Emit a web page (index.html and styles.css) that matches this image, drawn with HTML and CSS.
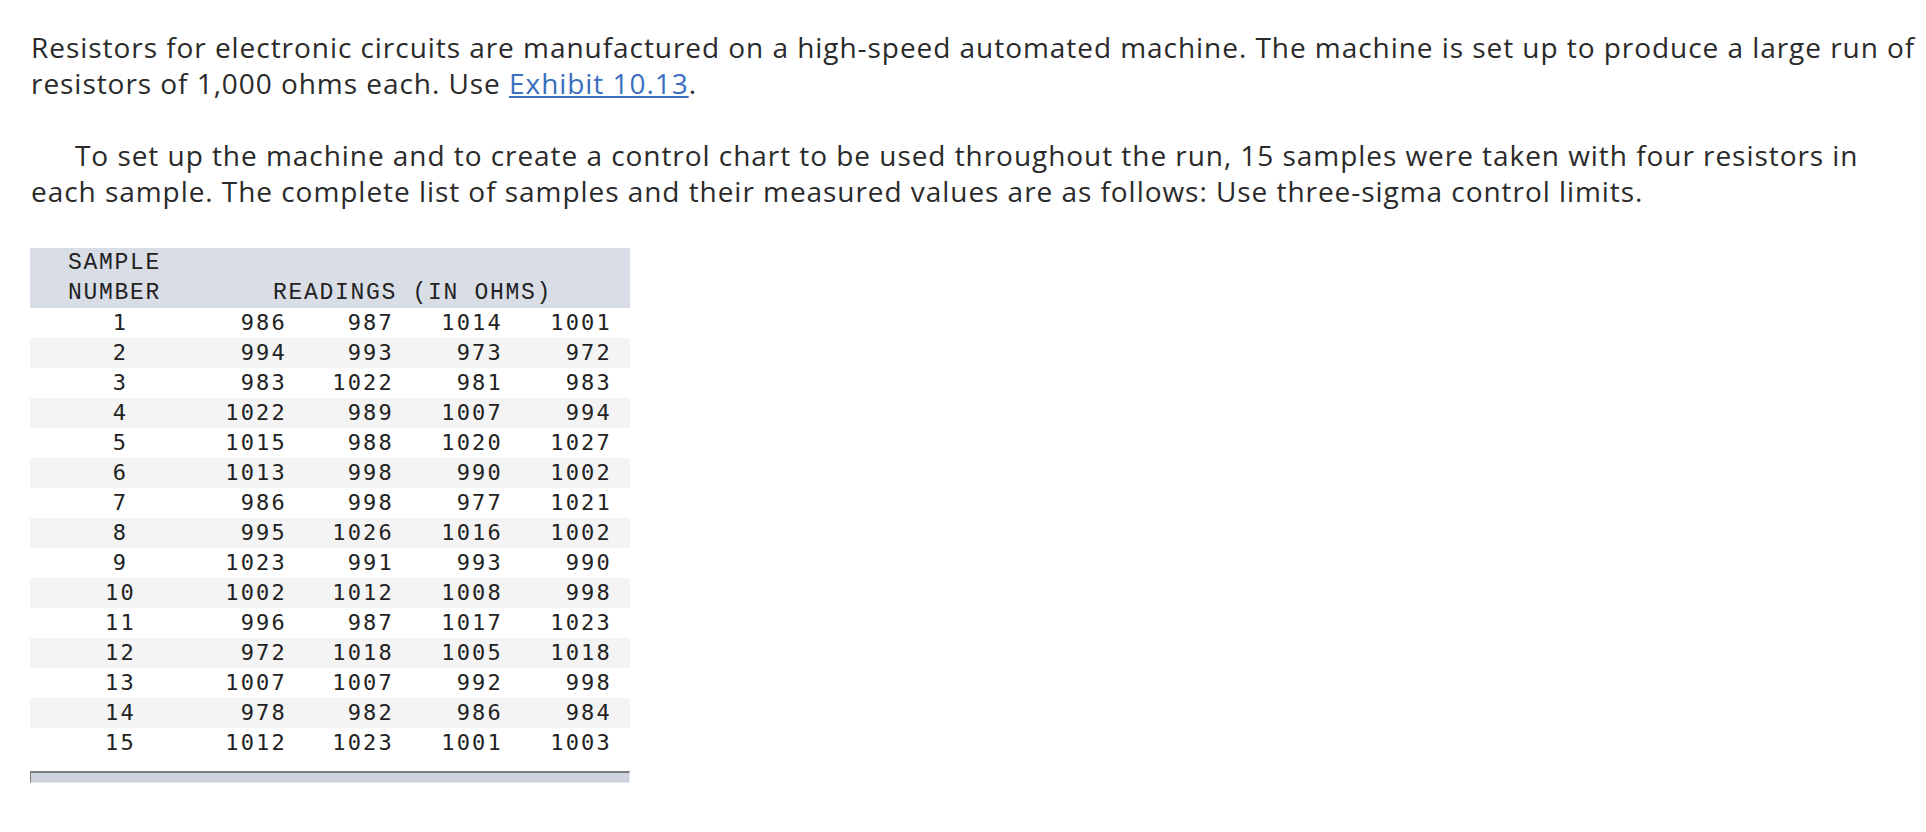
FILE: index.html
```html
<!DOCTYPE html>
<html lang="en">
<head>
<meta charset="utf-8">
<title>Resistors control chart</title>
<link rel="stylesheet" href="styles.css">
</head>
<body>
<main class="question">
  <p class="para first">Resistors for electronic circuits are manufactured on a high-speed automated machine. The machine is set up to produce a large run of resistors of 1,000 ohms each. Use <a class="link" href="#">Exhibit 10.13</a>.</p>
  <p class="para indent">To set up the machine and to create a control chart to be used throughout the run, 15 samples were taken with four resistors in each sample. The complete list of samples and their measured values are as follows: Use three-sigma control limits.</p>

  <div class="exhibit">
    <div class="thead">
      <div class="th-first"><span>SAMPLE</span><span>NUMBER</span></div>
      <div class="th-rest">READINGS (IN OHMS)</div>
    </div>
    <div class="tbody">
      <div class="row"><span class="num">1</span><span>986</span><span>987</span><span>1014</span><span>1001</span></div>
      <div class="row"><span class="num">2</span><span>994</span><span>993</span><span>973</span><span>972</span></div>
      <div class="row"><span class="num">3</span><span>983</span><span>1022</span><span>981</span><span>983</span></div>
      <div class="row"><span class="num">4</span><span>1022</span><span>989</span><span>1007</span><span>994</span></div>
      <div class="row"><span class="num">5</span><span>1015</span><span>988</span><span>1020</span><span>1027</span></div>
      <div class="row"><span class="num">6</span><span>1013</span><span>998</span><span>990</span><span>1002</span></div>
      <div class="row"><span class="num">7</span><span>986</span><span>998</span><span>977</span><span>1021</span></div>
      <div class="row"><span class="num">8</span><span>995</span><span>1026</span><span>1016</span><span>1002</span></div>
      <div class="row"><span class="num">9</span><span>1023</span><span>991</span><span>993</span><span>990</span></div>
      <div class="row"><span class="num">10</span><span>1002</span><span>1012</span><span>1008</span><span>998</span></div>
      <div class="row"><span class="num">11</span><span>996</span><span>987</span><span>1017</span><span>1023</span></div>
      <div class="row"><span class="num">12</span><span>972</span><span>1018</span><span>1005</span><span>1018</span></div>
      <div class="row"><span class="num">13</span><span>1007</span><span>1007</span><span>992</span><span>998</span></div>
      <div class="row"><span class="num">14</span><span>978</span><span>982</span><span>986</span><span>984</span></div>
      <div class="row"><span class="num">15</span><span>1012</span><span>1023</span><span>1001</span><span>1003</span></div>
    </div>
    <div class="scrollbar"></div>
  </div>
</main>
</body>
</html>
```

FILE: styles.css
```css
html, body {
  margin: 0;
  padding: 0;
  background: #ffffff;
}

.question {
  padding: 29px 0 0 31px;
  font-family: "Open Sans", "Noto Sans", sans-serif;
  color: #2a2a2a;
}

.para {
  margin: 0 0 36px 0;
  font-size: 28px;
  line-height: 36px;
  letter-spacing: 0.95px;
}

.para.first {
  max-width: 1893px;
}

.para.indent {
  max-width: 1845px;
  text-indent: 44px;
  margin-bottom: 39px;
}

.link {
  color: #3a6fc0;
  text-decoration: underline;
  text-decoration-thickness: 2px;
  text-underline-offset: 2px;
}

.exhibit {
  width: 600px;
  margin-left: -1px;
}

.thead {
  background: #d9dde6;
  display: flex;
  height: 60px;
  font-family: "Liberation Mono", "Courier New", monospace;
  font-size: 23px;
  letter-spacing: 1.7px;
  line-height: 30px;
  color: #222;
}

.th-first {
  display: flex;
  flex-direction: column;
  padding-left: 38px;
  width: 205px;
}

.th-rest {
  align-self: flex-end;
}

.row {
  display: grid;
  grid-template-columns: 178px 79px 107px 109px 109px;
  height: 30px;
  line-height: 30px;
  font-family: "DejaVu Sans Mono", monospace;
  font-size: 22px;
  letter-spacing: 2.2px;
  color: #222;
}

.row:nth-child(even) {
  background: #f4f4f4;
}

.row span {
  text-align: right;
}

.row span.num {
  text-align: center;
  padding-left: 3px;
}

.scrollbar {
  margin-top: 13px;
  height: 9px;
  background: #cdd3df;
  border-top: 2px solid #7d7d7d;
  border-left: 1px solid #7d7d7d;
  border-right: 1px solid #e6e9f0;
  border-bottom: 1px solid #e6e9f0;
}
```
